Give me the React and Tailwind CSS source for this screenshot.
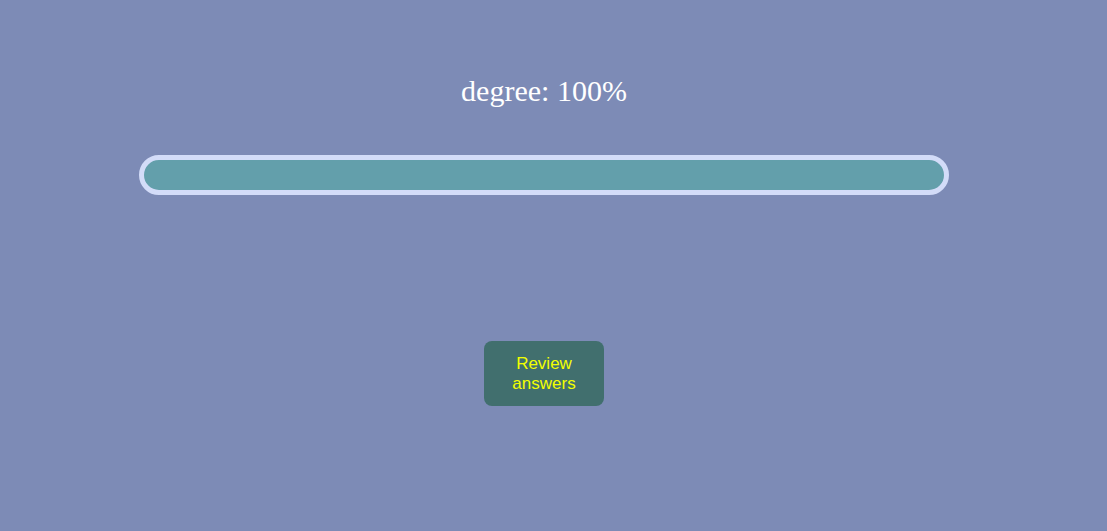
export default function App() {
  return (
    <div className="w-full h-[531px] bg-[#7d8bb6] overflow-hidden">
      <div className="w-[1088px] flex flex-col items-center">
        <div className="mt-[71px] h-[40px] text-[30px] leading-[40px] text-white" style={{ fontFamily: '"Liberation Serif", serif' }}>
          degree: 100%
        </div>
        <div className="mt-[44px] w-[810px] h-[40px] rounded-full border-[5px] border-[#d3dcf8] bg-[#639fab]" />
        <button className="mt-[146px] w-[120px] h-[65px] rounded-[8px] bg-[#416f6e] text-[#f2ff00] text-[17px] leading-[20px]" style={{ fontFamily: '"Liberation Sans", Arial, sans-serif' }}>
          Review<br />answers
        </button>
      </div>
    </div>
  );
}
